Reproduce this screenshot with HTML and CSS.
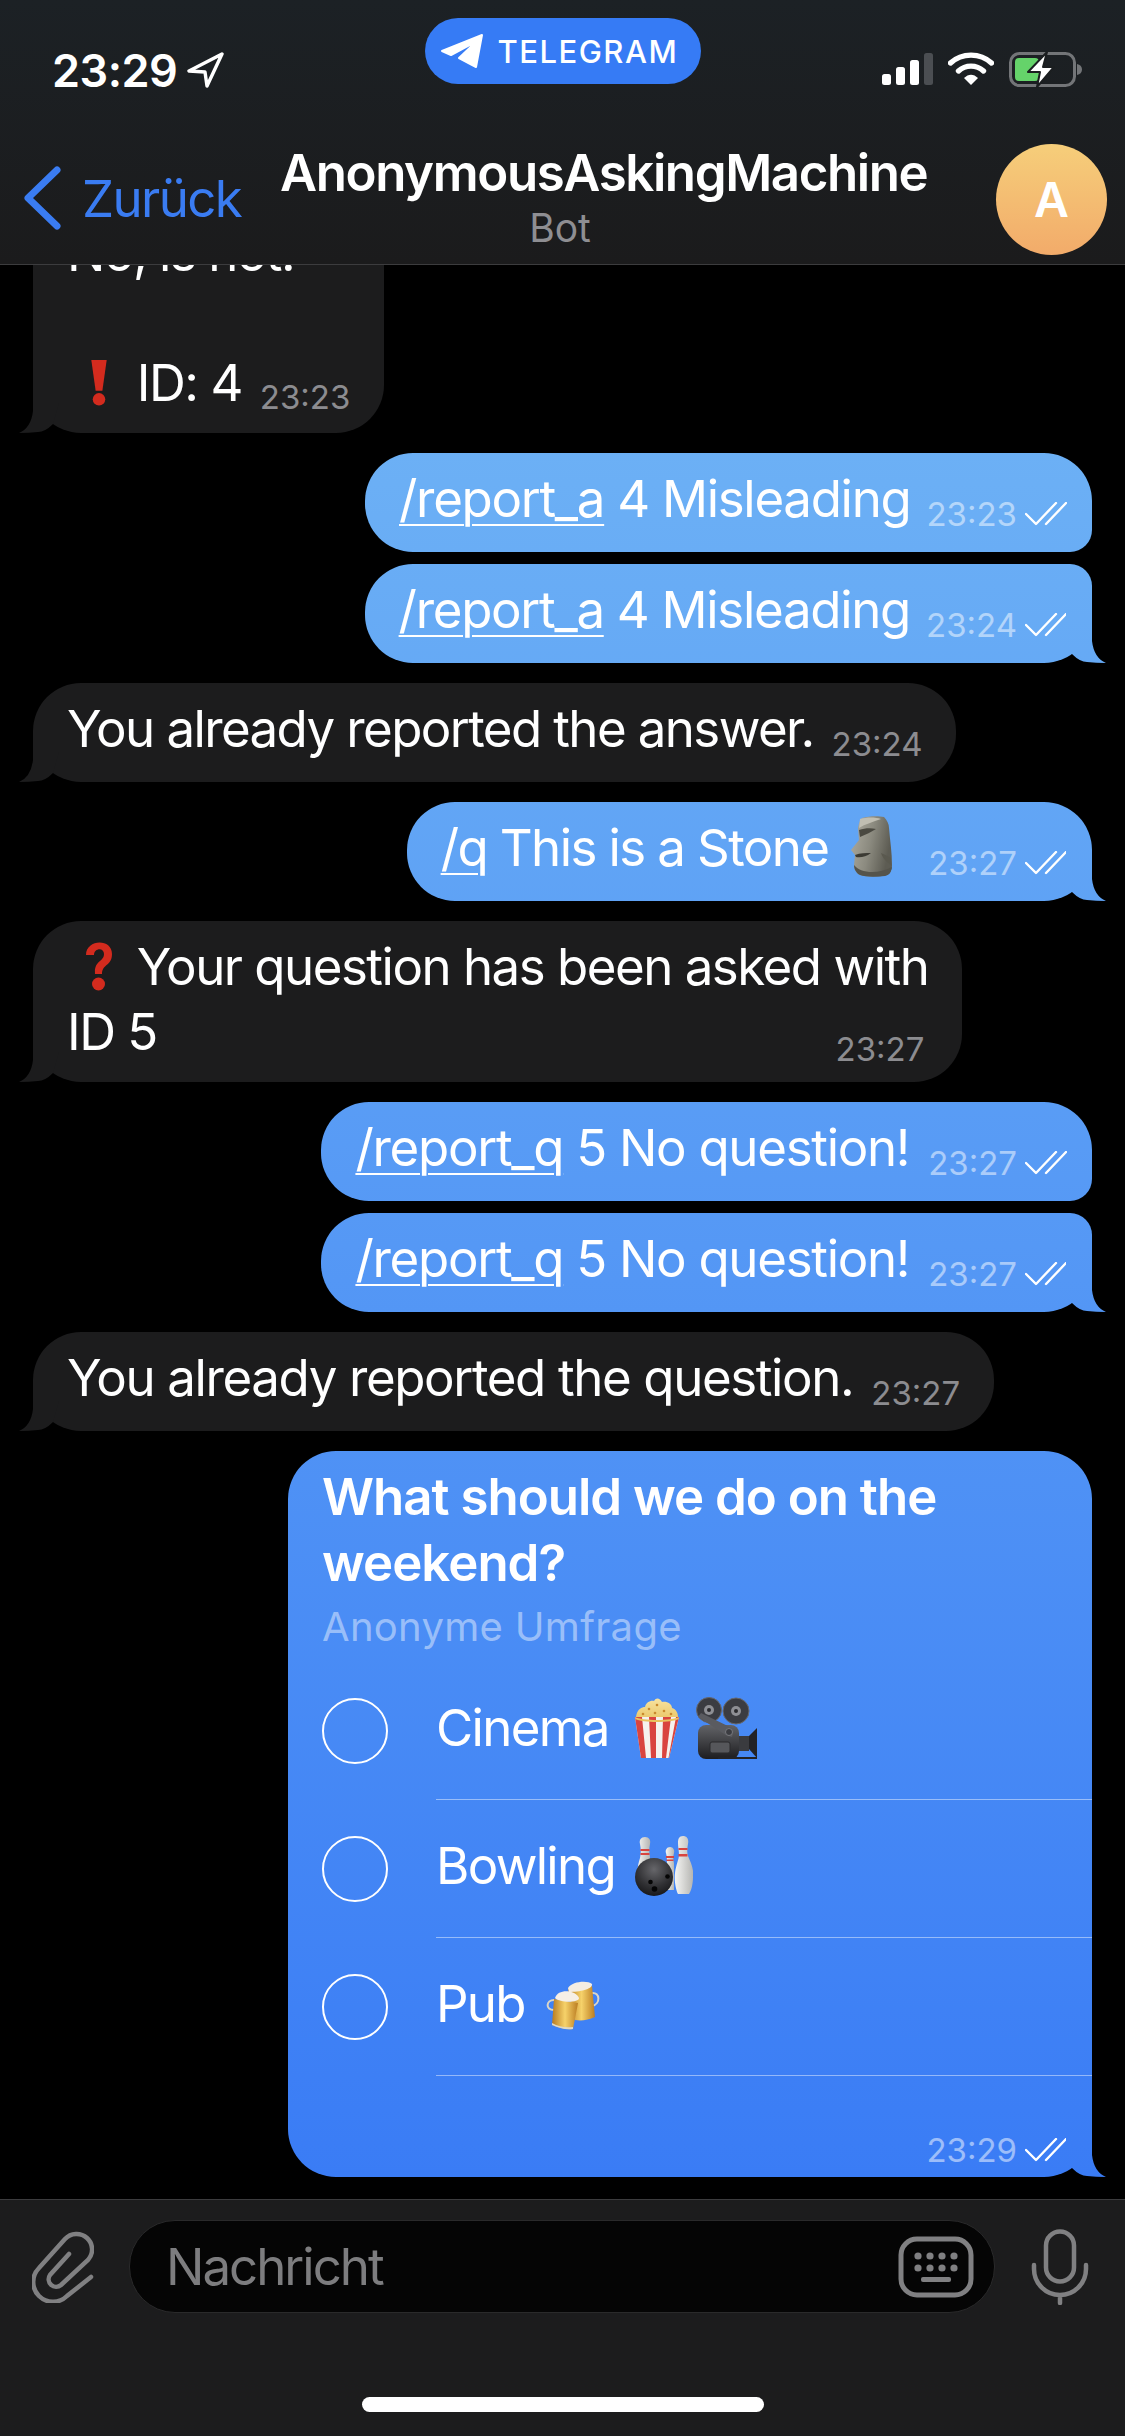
FILE: index.html
```html
<!DOCTYPE html>
<html lang="de">
<head>
    <meta charset="UTF-8">
    <meta name="viewport" content="width=device-width, initial-scale=1.0">
    <title>AnonymousAskingMachine</title>
    <link rel="stylesheet" href="styles.css">
</head>
<body>
    <svg class="defs" width="0" height="0">
        <defs>
            <linearGradient id="stone" x1="0" x2="1" y1="0" y2="0.3"><stop offset="0" stop-color="#b0aea2"/><stop offset="0.55" stop-color="#8b8a7f"/><stop offset="1" stop-color="#5d5c53"/></linearGradient>
            <linearGradient id="steel" x1="0" x2="0" y1="0" y2="1"><stop offset="0" stop-color="#626367"/><stop offset="1" stop-color="#1d1d20"/></linearGradient>
            <radialGradient id="ball" cx="0.5" cy="0.3" r="0.75"><stop offset="0" stop-color="#66666a"/><stop offset="0.6" stop-color="#313134"/><stop offset="1" stop-color="#141416"/></radialGradient>
            <linearGradient id="pin" x1="0" x2="1" y1="0" y2="0"><stop offset="0" stop-color="#f6f6f4"/><stop offset="1" stop-color="#b5b5b2"/></linearGradient>
            <linearGradient id="beer" x1="0" x2="1" y1="0" y2="0"><stop offset="0" stop-color="#b87a20"/><stop offset="0.5" stop-color="#f6d26a"/><stop offset="1" stop-color="#bb7d22"/></linearGradient>
            <linearGradient id="corn" x1="0" x2="0" y1="0" y2="1"><stop offset="0" stop-color="#f7e3a0"/><stop offset="1" stop-color="#e8c25e"/></linearGradient>
        </defs>
        <symbol id="ticks" viewBox="0 0 42 24">
            <path d="M1 12 L11 22 L31 1 M21 22 L41 1" fill="none" stroke="#fff" stroke-width="2.4" stroke-linecap="round" stroke-linejoin="round"/>
        </symbol>
    </svg>

    <div class="phone">
        <header class="topbar">
            <div class="status">
                <div class="clock">
                    <span>23:29</span>
                    <svg class="locate" viewBox="0 0 38 36"><path d="M35 2 L2 19 L18 20 L20 34 Z" fill="none" stroke="#fff" stroke-width="3.4" stroke-linejoin="round"/></svg>
                </div>
                <div class="pill">
                    <svg class="plane" viewBox="0 0 44 36"><path d="M2 18 L42 2 L36 34 L19 25 L37 8 L11 22 Z" fill="#fff" stroke="#fff" stroke-width="2" stroke-linejoin="round"/></svg>
                    <span>TELEGRAM</span>
                </div>
                <div class="status-icons">
                    <svg class="signal" viewBox="0 0 51 32">
                        <rect x="0" y="21" width="9" height="11" rx="2.5" fill="#fff"/>
                        <rect x="14" y="14" width="9" height="18" rx="2.5" fill="#fff"/>
                        <rect x="28" y="7" width="9" height="25" rx="2.5" fill="#fff"/>
                        <rect x="42" y="0" width="9" height="32" rx="2.5" fill="#4b4e52"/>
                    </svg>
                    <svg class="wifi" viewBox="0 0 46 33">
                        <path d="M2.5 11 C14 0.5 32 0.5 43.5 11" fill="none" stroke="#fff" stroke-width="5.4" stroke-linecap="round"/>
                        <path d="M10.5 19 C17.5 12.5 28.5 12.5 35.5 19" fill="none" stroke="#fff" stroke-width="5.4" stroke-linecap="round"/>
                        <path d="M16 26 C20.5 21.5 25.5 21.5 30 26 L23 33 Z" fill="#fff"/>
                    </svg>
                    <svg class="battery" viewBox="0 0 74 36">
                        <rect x="1.5" y="1.5" width="64" height="32" rx="9" fill="none" stroke="#737578" stroke-width="3"/>
                        <path d="M68 12 C71 12.500 73 14.500 73 17.500 C73 20.500 71 22.500 68 23 Z" fill="#737578"/>
                        <rect x="6" y="6" width="24" height="23" rx="4" fill="#65d36a"/>
                        <path d="M38 0 L19 20 L31 20 L28 35 L45 15 L34 15 Z" fill="#fff" stroke="#1b1e20" stroke-width="2" stroke-linejoin="round"/>
                    </svg>
                </div>
            </div>
            <nav class="navbar">
                <div class="back">
                    <svg class="chevron" viewBox="0 0 38 64"><path d="M33 4 L4 32 L33 60" fill="none" stroke="#3a7cf2" stroke-width="7" stroke-linecap="round" stroke-linejoin="round"/></svg>
                    <span>Zurück</span>
                </div>
                <div class="title">
                    <div class="title-name">AnonymousAskingMachine</div>
                    <div class="title-sub">Bot</div>
                </div>
                <div class="avatar">A</div>
            </nav>
        </header>

        <main class="chat">
            <div class="bubble in tall plain">
                <div class="msg-text">No, is not.<br><br><svg class="emoji-mark" viewBox="0 0 24 52"><path d="M4 3 H20 L15.500 35 H8.500 Z" fill="#d32b1e"/><circle cx="12" cy="44" r="6.500" fill="#d32b1e"/></svg> ID: 4<span class="time time-inline">23:23</span></div>
                <i class="tail"></i>
            </div>

            <div class="group">
                <div class="bubble out first">
                    <div class="msg-text"><span class="cmd">/report_a</span> 4 Misleading</div>
                    <div class="meta"><span class="time">23:23</span><svg class="ticks"><use href="#ticks"/></svg></div>
                </div>
                <div class="bubble out last">
                    <div class="msg-text"><span class="cmd">/report_a</span> 4 Misleading</div>
                    <div class="meta"><span class="time">23:24</span><svg class="ticks"><use href="#ticks"/></svg></div>
                    <i class="tail"></i>
                </div>
            </div>

            <div class="bubble in tight">
                <div class="msg-text">You already reported the answer.</div>
                <div class="meta"><span class="time">23:24</span></div>
                <i class="tail"></i>
            </div>

            <div class="bubble out tight">
                <div class="msg-text"><span class="cmd">/q</span> This is a Stone
                    <svg class="emoji-moai" viewBox="22 10 46 62">
                        <path d="M35 13 C42 11 51 11 57 12 C60 15 62 19 62 23 C63 35 65 48 65 60 C65 65 63 69 60 70 C52 72 41 72 33 70 C29 68 27 64 27 60 L28 50 L24 45 L32 35 L31 23 C32 18 33 15 35 13 Z" fill="url(#stone)"/>
                        <path d="M32 25 C38 23 44 23 49 24 C44 27 38 30 33 32 Z" fill="#4a4941"/>
                        <path d="M28 50 C33 48 39 48 44 48 C39 52 33 53 29 52 Z" fill="#3c3b34"/>
                        <path d="M33 14 C40 12 48 12 54 14 C46 17 38 19 32 23 Z" fill="#c0beb2"/>
                        <path d="M54 48 C58 50 61 51 64 53 L64 60 C60 57 56 54 54 48 Z" fill="#5a594f"/>
                        <path d="M27 60 C33 68 50 70 65 62 C64 68 62 70 58 71 C48 72 38 72 33 70 C29 68 27 64 27 60 Z" fill="#55544b"/>
                    </svg>
                </div>
                <div class="meta"><span class="time">23:27</span><svg class="ticks"><use href="#ticks"/></svg></div>
                <i class="tail"></i>
            </div>

            <div class="bubble in tall stacked">
                <div class="msg-text"><svg class="emoji-mark" viewBox="0 0 30 50"><path d="M2 14 C2 -2 28 -3 28 13 C28 25 18 23 18 33 H11 C10 19 20 21 20 13 C20 6 10 7 10 14 Z" fill="#d32b1e"/><circle cx="14.500" cy="43" r="6.500" fill="#d32b1e"/></svg> Your question has been asked with<br>ID 5</div>
                <div class="meta"><span class="time">23:27</span></div>
                <i class="tail"></i>
            </div>

            <div class="group">
                <div class="bubble out first wide-gap">
                    <div class="msg-text"><span class="cmd">/report_q</span> 5 No question!</div>
                    <div class="meta"><span class="time">23:27</span><svg class="ticks"><use href="#ticks"/></svg></div>
                </div>
                <div class="bubble out last wide-gap">
                    <div class="msg-text"><span class="cmd">/report_q</span> 5 No question!</div>
                    <div class="meta"><span class="time">23:27</span><svg class="ticks"><use href="#ticks"/></svg></div>
                    <i class="tail"></i>
                </div>
            </div>

            <div class="bubble in loose">
                <div class="msg-text">You already reported the question.</div>
                <div class="meta"><span class="time">23:27</span></div>
                <i class="tail"></i>
            </div>

            <div class="bubble out poll">
                <div class="poll-question">What should we do on the weekend?</div>
                <div class="poll-kind">Anonyme Umfrage</div>
                <div class="poll-options">
                    <div class="poll-option">
                        <span class="radio"></span>
                        <div class="poll-label">
                            <span>Cinema</span>
                            <svg class="emoji-poll popcorn" viewBox="12 12 46 62">
                                <path d="M14 32 C15 24 20 22 23 22 C24 17 29 15 32 16 C34 12 38 13 40 17 C45 16 50 19 50 23 C54 24 56 28 56 32 L50 38 H20 Z" fill="url(#corn)"/>
                                <g fill="#c98a2e"><circle cx="27" cy="24" r="1.300"/><circle cx="35" cy="20" r="1.300"/><circle cx="42" cy="26" r="1.300"/><circle cx="33" cy="28" r="1.300"/><circle cx="49" cy="29" r="1.300"/><circle cx="21" cy="29" r="1.300"/></g>
                                <path d="M13 32 H57 L47 73 H19 Z" fill="#f5f2ee"/>
                                <path d="M13 32 H20 L24 73 H19 Z M27 32 H34 L34 73 H29 Z M41 32 H49 L44 73 H40 Z M54 32 H57 L47 73 H46.500 Z" fill="#d9443f"/>
                                <path d="M13 32 C20 36 50 36 57 32 L56.500 34 C50 38 20 38 13.500 34 Z" fill="#e9c35f"/>
                            </svg>
                            <svg class="emoji-poll camera" viewBox="74 10 62 64">
                                <circle cx="87" cy="24" r="12.500" fill="#3b3c41" stroke="#66676c" stroke-width="1"/><circle cx="87" cy="24" r="5" fill="#8e8f94"/><circle cx="87" cy="24" r="2" fill="#2a2a2d"/>
                                <circle cx="114" cy="25" r="13" fill="#3b3c41" stroke="#66676c" stroke-width="1"/><circle cx="114" cy="25" r="5" fill="#8e8f94"/><circle cx="114" cy="25" r="2" fill="#2a2a2d"/>
                                <rect x="76" y="39" width="41" height="34" rx="8" fill="url(#steel)"/>
                                <rect x="88" y="56" width="20" height="11" rx="2" fill="#56575b" stroke="#2a2a2d" stroke-width="1"/>
                                <path d="M76 31 L79 27 L112 43 L110 51 L104 49 Z" fill="#5a5b60"/>
                                <circle cx="107" cy="46" r="3.500" fill="#3b3c41" stroke="#77787c" stroke-width="1"/>
                                <rect x="117" y="50" width="10" height="15" fill="#3a3b3f"/>
                                <path d="M127 50 L135 42 V72 L127 63 Z" fill="#232326"/>
                                <path d="M96 71 H135 V73 H96 Z" fill="#232326"/>
                            </svg>
                        </div>
                    </div>
                    <div class="poll-option">
                        <span class="radio"></span>
                        <div class="poll-label">
                            <span>Bowling</span>
                            <svg class="emoji-poll bowling" viewBox="104 11 58 60">
                                <path d="M114 12 C118 12 120 15 119 19 C118 24 118 28 119 32 L118 62 H109 C105 52 106 42 109 33 C110 28 110 24 109 19 C108 15 110 12 114 12 Z" fill="url(#pin)"/>
                                <path d="M139 22 C142 22 144 25 143 28 C142 32 142 35 143 38 V65 H136 V38 C136 35 136 32 135 28 C134 25 136 22 139 22 Z" fill="url(#pin)"/>
                                <path d="M152 11 C156 11 158 14 157 19 C156 24 156 28 157 31 C160 38 163 44 162 52 C162 60 160 66 158 69 H147 C145 65 143 56 144 48 C145 40 148 34 148 30 C148 26 147 22 147 18 C147 14 148 11 152 11 Z" fill="url(#pin)"/>
                                <g fill="#d9443f">
                                    <rect x="109.500" y="24" width="9" height="2"/><rect x="109.500" y="28" width="9" height="2"/>
                                    <rect x="135" y="31" width="8" height="2"/><rect x="135.500" y="34.500" width="7" height="1.500"/>
                                    <rect x="147.500" y="23" width="9" height="2"/><rect x="147.500" y="29" width="9" height="2.500"/>
                                </g>
                                <circle cx="123" cy="52" r="19" fill="url(#ball)"/>
                                <g fill="#050505"><circle cx="119.500" cy="57" r="2.300"/><circle cx="123.500" cy="64" r="2.800"/><circle cx="136.500" cy="51.500" r="2.300"/></g>
                            </svg>
                        </div>
                    </div>
                    <div class="poll-option">
                        <span class="radio"></span>
                        <div class="poll-label">
                            <span>Pub</span>
                            <svg class="emoji-poll beers" viewBox="16 155 54 50">
                                <path d="M62 167 C70 166 71 178 62 180" fill="none" stroke="#d9d5c8" stroke-width="2"/>
                                <path d="M38 163 L62 160 L65 191 C58 194 52 195 45 194 Z" fill="url(#beer)"/>
                                <path d="M38 162 C42 155 58 154 62 158 C63 163 50 166 39 166 Z" fill="#f4ede2"/>
                                <path d="M24 184 C15 184 16 174 24 174" fill="none" stroke="#d9d5c8" stroke-width="2"/>
                                <path d="M24 173 L48 177 L43 203 C36 204 29 202 22 199 Z" fill="url(#beer)"/>
                                <path d="M25 172 C28 162 46 164 49 172 C49 177 30 177 25 172 Z" fill="#f6efe6"/>
                                <path d="M22 197 C29 201 36 202 43 201 V203 C36 204 29 202 22 199 Z" fill="#ddd8c8"/>
                            </svg>
                        </div>
                    </div>
                </div>
                <div class="poll-foot">
                    <span class="time">23:29</span><svg class="ticks"><use href="#ticks"/></svg>
                </div>
                <i class="tail"></i>
            </div>
        </main>

        <footer class="composer">
            <div class="composer-row">
                <svg class="clip-icon" viewBox="17 13 62 72">
                    <path d="M76 59 L52 78 A19.500 19.500 0 0 1 24 50 L50 21 A13 13 0 0 1 73 42 L46 67 A7.500 7.500 0 0 1 35 57 L54 36" fill="none" stroke="#808082" stroke-width="4.500" stroke-linecap="round"/>
                </svg>
                <div class="input-box">
                    <span class="placeholder">Nachricht</span>
                    <svg class="key-icon" viewBox="0 0 76 62">
                        <rect x="3" y="3" width="70" height="56" rx="16" fill="none" stroke="#808082" stroke-width="5"/>
                        <g fill="#808082">
                            <circle cx="20" cy="20" r="3.600"/><circle cx="32" cy="20" r="3.600"/><circle cx="44" cy="20" r="3.600"/><circle cx="56" cy="20" r="3.600"/>
                            <circle cx="20" cy="32" r="3.600"/><circle cx="32" cy="32" r="3.600"/><circle cx="44" cy="32" r="3.600"/><circle cx="56" cy="32" r="3.600"/>
                            <rect x="23" y="41" width="30" height="5" rx="2"/>
                        </g>
                    </svg>
                </div>
                <svg class="mic-icon" viewBox="0 0 58 76">
                    <rect x="15" y="2.500" width="28" height="50" rx="14" fill="none" stroke="#808082" stroke-width="4.500"/>
                    <path d="M3 36 V40 A26 26 0 0 0 55 40 V36 M29 66 V74" fill="none" stroke="#808082" stroke-width="4.500" stroke-linecap="round"/>
                </svg>
            </div>
            <div class="home-bar"></div>
        </footer>
    </div>
</body>
</html>
```

FILE: styles.css
```css
* {
    box-sizing: border-box;
}
html, body {
    margin: 0;
    padding: 0;
    background-color: #000;
}
body {
    font-family: Inter, "Liberation Sans", sans-serif;
    color: #fff;
    overflow: hidden;
}
.defs {
    position: absolute;
}
.phone {
    display: flex;
    flex-direction: column;
    height: 100vh;
}

/* top bars */
.topbar {
    flex: none;
    height: 265px;
    background: linear-gradient(#1c2125, #1b1b1c);
    border-bottom: 1px solid #3c3c3e;
}
.status {
    display: grid;
    grid-template-columns: 1fr 276px 1fr;
    height: 100px;
}
.clock {
    display: flex;
    align-items: center;
    gap: 10px;
    padding: 50px 0 0 52px;
    height: 90px;
    font-size: 45px;
    font-weight: 600;
    letter-spacing: -0.5px;
}
.locate {
    width: 38px;
    height: 36px;
}
.pill {
    display: flex;
    align-items: center;
    gap: 14px;
    height: 66px;
    margin-top: 18px;
    padding-left: 15px;
    background-color: #367bf5;
    border-radius: 33px;
    font-size: 31px;
    font-weight: 500;
    letter-spacing: 1.5px;
}
.plane {
    width: 44px;
    height: 36px;
}
.status-icons {
    display: flex;
    align-items: flex-start;
    justify-content: flex-end;
    padding: 52px 42px 0 0;
}
.signal {
    width: 51px;
    height: 32px;
    margin-top: 1px;
    margin-right: 15px;
}
.wifi {
    width: 46px;
    height: 33px;
    margin-right: 15px;
}
.battery {
    width: 74px;
    height: 36px;
}
.navbar {
    display: grid;
    grid-template-columns: 256px 1fr 111px;
    align-items: start;
    height: 164px;
    padding: 0 18px 0 24px;
}
.back {
    display: flex;
    align-items: center;
    gap: 20px;
    margin-top: 66px;
    font-size: 51px;
    color: #3a7cf2;
    letter-spacing: -1.6px;
}
.chevron {
    width: 38px;
    height: 64px;
}
.title {
    padding-top: 43px;
}
.title-name {
    font-size: 51px;
    font-weight: 600;
    line-height: 60px;
    letter-spacing: -1.4px;
}
.title-sub {
    width: 645px;
    padding-right: 85px;
    text-align: center;
    font-size: 39px;
    line-height: 50px;
    color: #8e8e92;
}
.avatar {
    display: flex;
    align-items: center;
    justify-content: center;
    width: 111px;
    height: 111px;
    margin-top: 44px;
    border-radius: 50%;
    background: linear-gradient(#f6ce7a, #f2ab6a);
    font-size: 48px;
    font-weight: 600;
}

/* messages */
.chat {
    flex: 1;
    min-height: 0;
    display: flex;
    flex-direction: column;
    justify-content: flex-end;
    gap: 20px;
    padding: 0 33px 22px;
    overflow: hidden;
}
.group {
    flex: none;
    display: flex;
    flex-direction: column;
    align-items: flex-end;
    gap: 12px;
}
.bubble {
    flex: none;
    position: relative;
    display: flex;
    align-items: flex-end;
    padding: 13px 34px 21px;
    border-radius: 48px;
    font-size: 51px;
    line-height: 65px;
    letter-spacing: -1.5px;
}
.bubble.tall {
    padding-bottom: 18px;
}
.bubble.plain {
    display: block;
}
.bubble.stacked {
    flex-direction: column;
    align-items: stretch;
    padding-bottom: 13px;
}
.stacked .msg-text {
    margin-bottom: 5px;
}
.stacked .meta {
    align-self: flex-end;
    margin: -40px 4px 0 0;
}
.in {
    align-self: flex-start;
    background-color: #1c1c1d;
}
.out {
    align-self: flex-end;
    padding-right: 25px;
    letter-spacing: -1.3px;
    background: linear-gradient(#6cb0f5 450px, #3a7cf5 2177px) fixed;
}
.tight {
    letter-spacing: -1.6px;
}
.loose {
    letter-spacing: -1.38px;
}
.first {
    border-bottom-right-radius: 22px;
}
.last {
    border-top-right-radius: 22px;
}
.msg-text {
    white-space: nowrap;
}
.cmd {
    text-decoration: underline;
    text-decoration-thickness: 2px;
    text-underline-offset: 7px;
}
.meta {
    flex: none;
    display: flex;
    align-items: center;
    gap: 8px;
    margin-left: 18px;
    height: 40px;
    margin-bottom: -3px;
}
.out .meta {
    margin-left: 16px;
}
.out.wide-gap .meta {
    margin-left: 19px;
}
.time {
    font-size: 33px;
    line-height: 40px;
    letter-spacing: 0;
    color: #8c8c90;
}
.out .time {
    color: rgba(255, 255, 255, 0.5);
}
.time-inline {
    margin-left: 18px;
    line-height: 20px;
    vertical-align: -8px;
}
.ticks {
    width: 42px;
    height: 24px;
}
.tail {
    position: absolute;
    bottom: 0;
    width: 40px;
    height: 50px;
    background: inherit;
}
.in .tail {
    left: -14px;
    clip-path: path("M14 0 L14 28 Q12 45 0 50 Q10 50 19 49 Q26 49 34 41 L40 20 L40 0 Z");
}
.out .tail {
    right: -14px;
    clip-path: path("M26 0 L26 28 Q28 45 40 50 Q30 50 21 49 Q14 49 6 41 L0 20 L0 0 Z");
}
.emoji-mark {
    width: 52px;
    height: 50px;
    margin: 0 -1px 0 6px;
    vertical-align: -6px;
}
.emoji-moai {
    width: 46px;
    height: 62px;
    margin: 0 17px 0 8px;
    vertical-align: -11px;
}

/* poll */
.poll {
    display: block;
    width: 804px;
    height: 726px;
    padding: 0 0 0 34px;
}
.poll-question {
    padding-right: 34px;
    padding-top: 13px;
    font-size: 51px;
    font-weight: 600;
    line-height: 66px;
    letter-spacing: -1px;
}
.poll-kind {
    font-size: 40px;
    line-height: 50px;
    letter-spacing: 0.3px;
    color: rgba(255, 255, 255, 0.45);
    margin-top: 6px;
}
.poll-options {
    margin-top: 10px;
}
.poll-option {
    display: flex;
    align-items: center;
    gap: 48px;
    height: 138px;
}
.radio {
    flex: none;
    width: 66px;
    height: 66px;
    margin-top: -1px;
    border: 2.5px solid #fff;
    border-radius: 50%;
}
.poll-label {
    flex: 1;
    display: flex;
    align-items: center;
    height: 100%;
    padding-bottom: 6px;
    border-bottom: 1px solid rgba(255, 255, 255, 0.45);
    letter-spacing: -1.7px;
}
.emoji-poll {
    flex: none;
}
.popcorn {
    width: 46px;
    height: 62px;
    margin-left: 25px;
}
.camera {
    width: 62px;
    height: 64px;
    margin-left: 16px;
}
.bowling {
    width: 58px;
    height: 60px;
    margin-left: 20px;
}
.beers {
    width: 54px;
    height: 50px;
    margin: 5px 0 0 21px;
}
.poll-foot {
    display: flex;
    align-items: center;
    justify-content: flex-end;
    gap: 8px;
    padding: 54px 25px 0 0;
}

/* composer */
.composer {
    flex: none;
    height: 237px;
    background-color: #1c1c1d;
    border-top: 1px solid #3c3c3e;
}
.composer-row {
    display: flex;
    align-items: center;
    height: 93px;
    margin-top: 20px;
    padding: 0 36px 0 32px;
}
.clip-icon {
    flex: none;
    width: 62px;
    height: 72px;
    margin-right: 35px;
}
.input-box {
    flex: 1;
    display: flex;
    align-items: center;
    justify-content: space-between;
    height: 93px;
    padding: 0 20px 0 36px;
    background-color: #050505;
    border: 1px solid #2a2a2b;
    border-radius: 46px;
}
.placeholder {
    font-size: 51px;
    letter-spacing: -2px;
    color: #7d7d7f;
}
.key-icon {
    width: 76px;
    height: 62px;
}
.mic-icon {
    flex: none;
    width: 58px;
    height: 76px;
    margin-left: 36px;
}
.home-bar {
    width: 402px;
    height: 15px;
    margin: 84px auto 0;
    background-color: #fff;
    border-radius: 8px;
}
```
